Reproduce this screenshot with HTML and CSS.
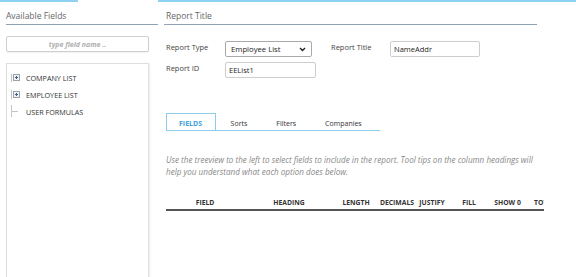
FILE: index.html
```html
<!DOCTYPE html>
<html lang="en">
<head>
  <meta charset="UTF-8" />
  <meta name="viewport" content="width=device-width, initial-scale=1.0" />
  <title>Report Designer</title>
  <link rel="stylesheet" href="styles.css">
</head>
<body>
  <!-- Top accent strip -->
  <div class="topbar">
    <span class="topbar-seg seg-left"></span>
    <span class="topbar-seg seg-right"></span>
  </div>

  <div class="layout">
    <!-- Left column: available fields -->
    <aside class="fields-panel">
      <h2 class="panel-title">Available Fields</h2>
      <input type="text" class="field-search" placeholder="type field name ..">
      <ul class="tree">
        <li class="tree-item">
          <svg class="tree-icon" width="9" height="17" viewBox="0 0 9 17">
            <line x1="0.5" y1="5" x2="0.5" y2="13" stroke="#c4c4c4" stroke-width="1"/>
            <rect x="2.5" y="5.5" width="6" height="6" fill="#eef2f7" stroke="#9aa3ad" stroke-width="1"/>
            <line x1="4" y1="8.5" x2="7" y2="8.5" stroke="#3d5f8c" stroke-width="1"/>
            <line x1="5.5" y1="7" x2="5.5" y2="10" stroke="#3d5f8c" stroke-width="1"/>
          </svg>
          <span>Company List</span>
        </li>
        <li class="tree-item">
          <svg class="tree-icon" width="9" height="17" viewBox="0 0 9 17">
            <line x1="0.5" y1="4" x2="0.5" y2="13" stroke="#c4c4c4" stroke-width="1"/>
            <rect x="2.5" y="5.5" width="6" height="6" fill="#eef2f7" stroke="#9aa3ad" stroke-width="1"/>
            <line x1="4" y1="8.5" x2="7" y2="8.5" stroke="#3d5f8c" stroke-width="1"/>
            <line x1="5.5" y1="7" x2="5.5" y2="10" stroke="#3d5f8c" stroke-width="1"/>
          </svg>
          <span>Employee List</span>
        </li>
        <li class="tree-item">
          <svg class="tree-icon" width="9" height="17" viewBox="0 0 9 17">
            <line x1="0.5" y1="2" x2="0.5" y2="14" stroke="#c4c4c4" stroke-width="1"/>
            <line x1="0.5" y1="8.5" x2="7" y2="8.5" stroke="#c4c4c4" stroke-width="1"/>
          </svg>
          <span>User Formulas</span>
        </li>
      </ul>
    </aside>

    <!-- Right column: report settings -->
    <main class="report-panel">
      <h2 class="panel-title">Report Title</h2>

      <div class="report-form">
        <label class="form-label">Report Type</label>
        <div class="select-wrap">
          <select class="form-select">
            <option>Employee List</option>
          </select>
          <svg class="select-arrow" width="7" height="5" viewBox="0 0 7 5">
            <polyline points="1,1 3.5,3.5 6,1" fill="none" stroke="#222" stroke-width="1.4"/>
          </svg>
        </div>
        <label class="form-label">Report Title</label>
        <input type="text" class="form-input input-title" value="NameAddr">

        <label class="form-label">Report ID</label>
        <input type="text" class="form-input input-id" value="EEList1">
      </div>

      <!-- Tabs -->
      <ul class="tabs">
        <li class="tab active">FIELDS</li>
        <li class="tab">Sorts</li>
        <li class="tab">Filters</li>
        <li class="tab">Companies</li>
      </ul>

      <p class="help-text">Use the treeview to the left to select fields to include in the report. Tool tips on the column headings will help you understand what each option does below.</p>

      <div class="table-wrap">
        <table class="fields-table">
          <colgroup>
            <col style="width:78px">
            <col style="width:90px">
            <col style="width:44px">
            <col style="width:38px">
            <col style="width:32px">
            <col style="width:42px">
            <col style="width:35px">
            <col style="width:40px">
          </colgroup>
          <thead>
            <tr>
              <th>FIELD</th>
              <th>HEADING</th>
              <th>LENGTH</th>
              <th>DECIMALS</th>
              <th>JUSTIFY</th>
              <th>FILL</th>
              <th>SHOW 0</th>
              <th>TOTAL</th>
            </tr>
          </thead>
        </table>
      </div>
    </main>
  </div>
</body>
</html>
```

FILE: styles.css
```css
/* Reset and base styles */
* {
  padding: 0;
  margin: 0;
  box-sizing: border-box;
}

body {
  background-color: #fff;
  color: #333;
  font-family: "Open Sans", "Liberation Sans", sans-serif;
  height: 100vh;
  overflow: hidden;
}

/* Top accent strip */
.topbar {
  display: flex;
  height: 2px;
}

.topbar-seg {
  background-color: #8dd2f2;
}

.seg-left {
  width: 78px;
}

.seg-right {
  margin-left: 80px;
  flex: 1;
}

/* Two column layout */
.layout {
  display: flex;
  gap: 6px;
}

.panel-title {
  font-size: 8.5px;
  font-weight: 400;
  color: #666;
  line-height: 12px;
  padding: 8px 0 2px;
  border-bottom: 1px solid #8fa3b4;
}

/* Left panel */
.fields-panel {
  width: 158px;
  padding-left: 6px;
  display: flex;
  flex-direction: column;
}

.field-search {
  width: 143px;
  height: 16px;
  margin-top: 11px;
  border: 1px solid #cfcfcf;
  border-radius: 2px;
  box-shadow: 0 1px 1px rgba(0, 0, 0, 0.06);
  font-family: inherit;
  font-size: 7px;
  text-align: center;
  outline: none;
}

.field-search::placeholder {
  color: #b0b0b0;
  font-style: italic;
  font-weight: 700;
}

.tree {
  list-style: none;
  width: 143px;
  height: 220px;
  margin-top: 11px;
  padding: 5px 0 0 4px;
  border: 1px solid #dedede;
  box-shadow: 1px 1px 2px rgba(0, 0, 0, 0.08);
}

.tree-item {
  display: flex;
  align-items: center;
  height: 17px;
  font-size: 7.2px;
  text-transform: uppercase;
  color: #333;
}

.tree-icon {
  margin-right: 6px;
  flex-shrink: 0;
}

/* Right panel */
.report-panel {
  width: 373px;
}

.report-panel .panel-title {
  padding-left: 2px;
}

.report-form {
  display: grid;
  grid-template-columns: 59px 106px 59px 90px;
  grid-auto-rows: 16px;
  row-gap: 5px;
  margin-top: 16px;
  padding-left: 2px;
  align-items: start;
}

.form-label {
  font-size: 7.5px;
  color: #444;
  line-height: 12px;
}

.select-wrap {
  position: relative;
  width: 87px;
  height: 16px;
}

.form-select {
  display: block;
  appearance: none;
  -webkit-appearance: none;
  width: 87px;
  height: 16px;
  line-height: 14px;
  padding: 0 0 0 5px;
  border: 1px solid #a9a9a9;
  border-radius: 2px;
  background-color: #fff;
  font-family: inherit;
  font-size: 7.7px;
  color: #222;
}

.select-arrow {
  position: absolute;
  right: 6px;
  top: 6px;
  pointer-events: none;
}

.form-input {
  display: block;
  height: 16px;
  padding-left: 3px;
  border: 1px solid #cdcdcd;
  border-radius: 2px;
  font-family: inherit;
  font-size: 7.5px;
  color: #222;
  outline: none;
}

.input-title {
  width: 90px;
}

.input-id {
  width: 91px;
}

/* Tabs */
.tabs {
  display: flex;
  list-style: none;
  width: 214px;
  margin: 35px 0 0 2px;
  border-bottom: 1px solid #8ccdee;
}

.tab {
  height: 17px;
  padding: 3px 13.5px 0;
  line-height: 14px;
  font-size: 7px;
  color: #333;
  border: 1px solid transparent;
  border-bottom: none;
}

.tab.active {
  color: #3ea1d9;
  font-weight: 700;
  border-color: #8ccdee;
  padding: 3px 13px 0 12px;
}

/* Help text */
.help-text {
  margin: 23px 0 0 2px;
  font-size: 8.1px;
  font-style: italic;
  line-height: 12px;
  color: #888;
}

/* Column headings table */
.table-wrap {
  width: 378px;
  margin: 18px 0 0 2px;
  overflow: hidden;
}

.fields-table {
  table-layout: fixed;
  border-collapse: collapse;
  width: 399px;
}

.fields-table th {
  height: 14px;
  font-size: 6.8px;
  font-weight: 700;
  color: #333;
  white-space: nowrap;
  text-align: center;
  border-bottom: 2px solid #555;
}
```
